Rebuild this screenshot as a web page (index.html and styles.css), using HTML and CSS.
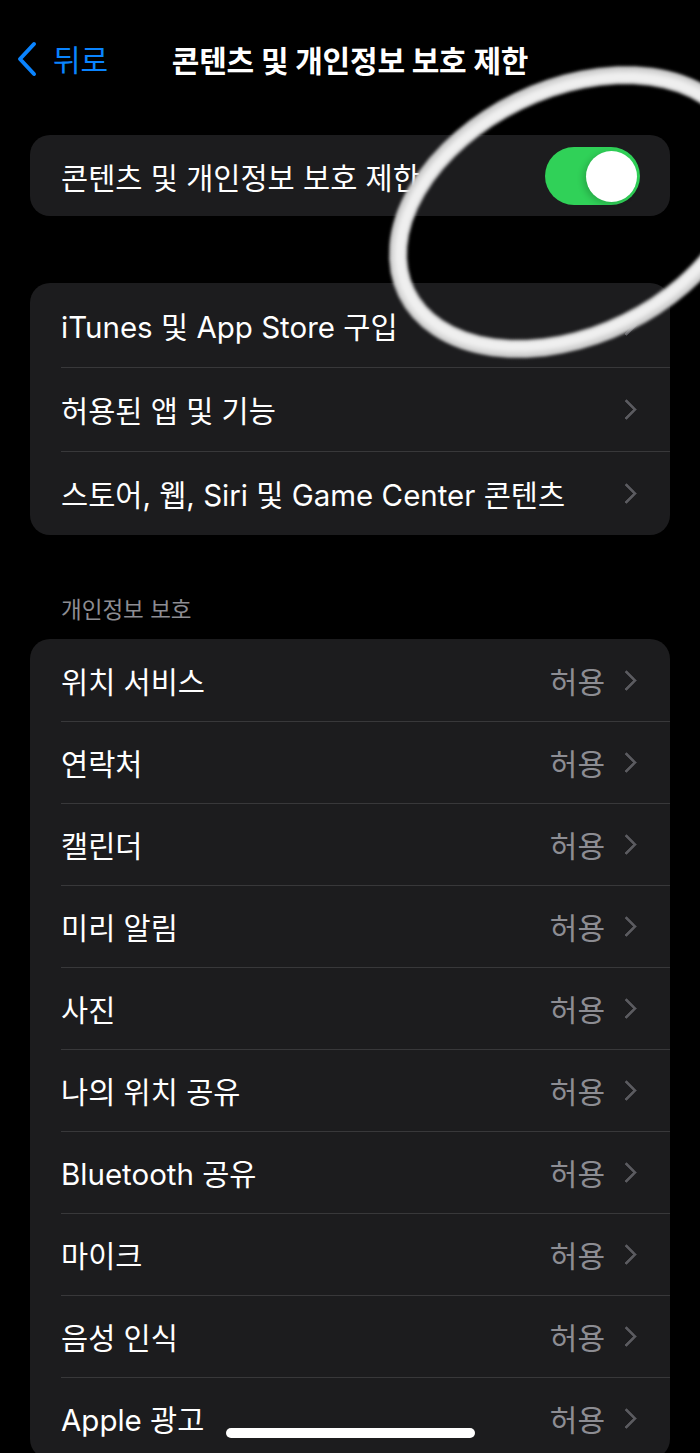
FILE: index.html
```html
<!DOCTYPE html>
<html lang="ko">
<head>
  <meta charset="UTF-8">
  <meta name="viewport" content="width=device-width, initial-scale=1.0">
  <title>콘텐츠 및 개인정보 보호 제한</title>
  <link rel="stylesheet" href="styles.css">
</head>
<body>

  <div class="screen">
    <!-- Navigation bar -->
    <div class="nav">
      <a class="back" href="#">
        <svg class="back-icon" width="22" height="36" viewBox="0 0 22 36">
          <path d="M18 3 L4 18 L18 33" fill="none" stroke="#0a84ff" stroke-width="4" stroke-linecap="round" stroke-linejoin="round"/>
        </svg>
        <span>뒤로</span>
      </a>
      <h1 class="title">콘텐츠 및 개인정보 보호 제한</h1>
      <div></div>
    </div>

    <!-- Master switch -->
    <div class="group group-switch">
      <div class="row">
        <span class="label">콘텐츠 및 개인정보 보호 제한</span>
        <div class="switch on"><div class="knob"></div></div>
      </div>
    </div>

    <div class="group group-store">
      <div class="row">
        <span class="label">iTunes 및 App Store 구입</span>
        <span class="chevron"></span>
      </div>
      <div class="row">
        <span class="label">허용된 앱 및 기능</span>
        <span class="chevron"></span>
      </div>
      <div class="row">
        <span class="label">스토어, 웹, Siri 및 Game Center 콘텐츠</span>
        <span class="chevron"></span>
      </div>
    </div>

    <div class="section-title">개인정보 보호</div>

    <div class="group group-privacy">
      <div class="row"><span class="label">위치 서비스</span><span class="value">허용</span><span class="chevron"></span></div>
      <div class="row"><span class="label">연락처</span><span class="value">허용</span><span class="chevron"></span></div>
      <div class="row"><span class="label">캘린더</span><span class="value">허용</span><span class="chevron"></span></div>
      <div class="row"><span class="label">미리 알림</span><span class="value">허용</span><span class="chevron"></span></div>
      <div class="row"><span class="label">사진</span><span class="value">허용</span><span class="chevron"></span></div>
      <div class="row"><span class="label">나의 위치 공유</span><span class="value">허용</span><span class="chevron"></span></div>
      <div class="row"><span class="label">Bluetooth 공유</span><span class="value">허용</span><span class="chevron"></span></div>
      <div class="row"><span class="label">마이크</span><span class="value">허용</span><span class="chevron"></span></div>
      <div class="row"><span class="label">음성 인식</span><span class="value">허용</span><span class="chevron"></span></div>
      <div class="row"><span class="label">Apple 광고</span><span class="value">허용</span><span class="chevron"></span></div>
    </div>

    <!-- Hand-drawn highlight ring over the switch -->
    <svg class="ring" width="700" height="400" viewBox="0 0 700 400">
      <defs>
        <filter id="soft" x="-20%" y="-20%" width="140%" height="140%">
          <feGaussianBlur stdDeviation="1.8"/>
        </filter>
      </defs>
      <g filter="url(#soft)" transform="rotate(-26 572 212)">
        <ellipse cx="572" cy="212" rx="184" ry="123" fill="none" stroke="#cfcfcf" stroke-width="18"/>
        <ellipse cx="572" cy="212" rx="182" ry="121" fill="none" stroke="#efefef" stroke-width="9"/>
        <ellipse cx="572" cy="212" rx="188" ry="126" fill="none" stroke="#e2e2e2" stroke-width="3"/>
      </g>
    </svg>

    <div class="home-indicator"></div>
  </div>

</body>
</html>
```

FILE: styles.css
```css
/* Basic Styling */
html, body {
  margin: 0;
  background-color: #000;
}

body {
  font-family: Inter, "Noto Sans CJK KR", sans-serif;
  color: #fff;
}

.screen {
  position: relative;
  height: 1453px;
  overflow: hidden;
  padding: 0 30px;
}

/* Navigation */
.nav {
  display: grid;
  grid-template-columns: 1fr auto 1fr;
  align-items: center;
  height: 118px;
  margin: 0 -30px;
}

.back {
  display: flex;
  align-items: center;
  gap: 15px;
  margin-left: 16px;
  color: #0a84ff;
  text-decoration: none;
  font-size: 30px;
}

.back span {
  margin-top: -2px;
}

.title {
  margin: 0;
  font-size: 30px;
  font-weight: 700;
  letter-spacing: -0.2px;
}

/* Groups */
.group {
  background-color: #1c1c1e;
  border-radius: 20px;
  overflow: hidden;
}

.group-switch {
  margin-top: 17px;
}

.group-switch .row {
  height: 81px;
}

.group-store {
  margin-top: 67px;
}

.group-store .row {
  height: 84px;
}

.group-privacy .row {
  height: 82px;
}

.row {
  display: flex;
  align-items: center;
  position: relative;
  padding: 0 31px;
  font-size: 29.5px;
}

.row + .row::before {
  content: "";
  position: absolute;
  top: 0;
  left: 31px;
  right: 0;
  height: 1px;
  background-color: #38383a;
}

.label {
  flex: 1;
  white-space: nowrap;
}

.value {
  color: #8d8d93;
  margin-right: 14px;
  font-size: 30px;
}

.chevron {
  width: 12px;
  height: 12px;
  border-top: 3px solid #5b5b60;
  border-right: 3px solid #5b5b60;
  transform: rotate(45deg);
  margin-right: 5px;
  border-radius: 1px;
}

/* Switch */
.switch {
  width: 95px;
  height: 58px;
  border-radius: 29px;
  background-color: #30d158;
  position: relative;
  margin-right: -1px;
}

.switch .knob {
  position: absolute;
  top: 4px;
  right: 3px;
  width: 51px;
  height: 51px;
  border-radius: 50%;
  background-color: #fff;
  box-shadow: -3px 2px 6px rgba(0, 0, 0, 0.18);
}

/* Section header */
.section-title {
  margin: 62px 0 16px 31px;
  font-size: 22.5px;
  line-height: 26px;
  color: #8d8d93;
}

/* Overlays */
.ring {
  position: absolute;
  top: 0;
  left: 0;
  pointer-events: none;
}

.home-indicator {
  position: absolute;
  left: 226px;
  bottom: 15px;
  width: 249px;
  height: 10px;
  border-radius: 5px;
  background-color: #fff;
}
```
